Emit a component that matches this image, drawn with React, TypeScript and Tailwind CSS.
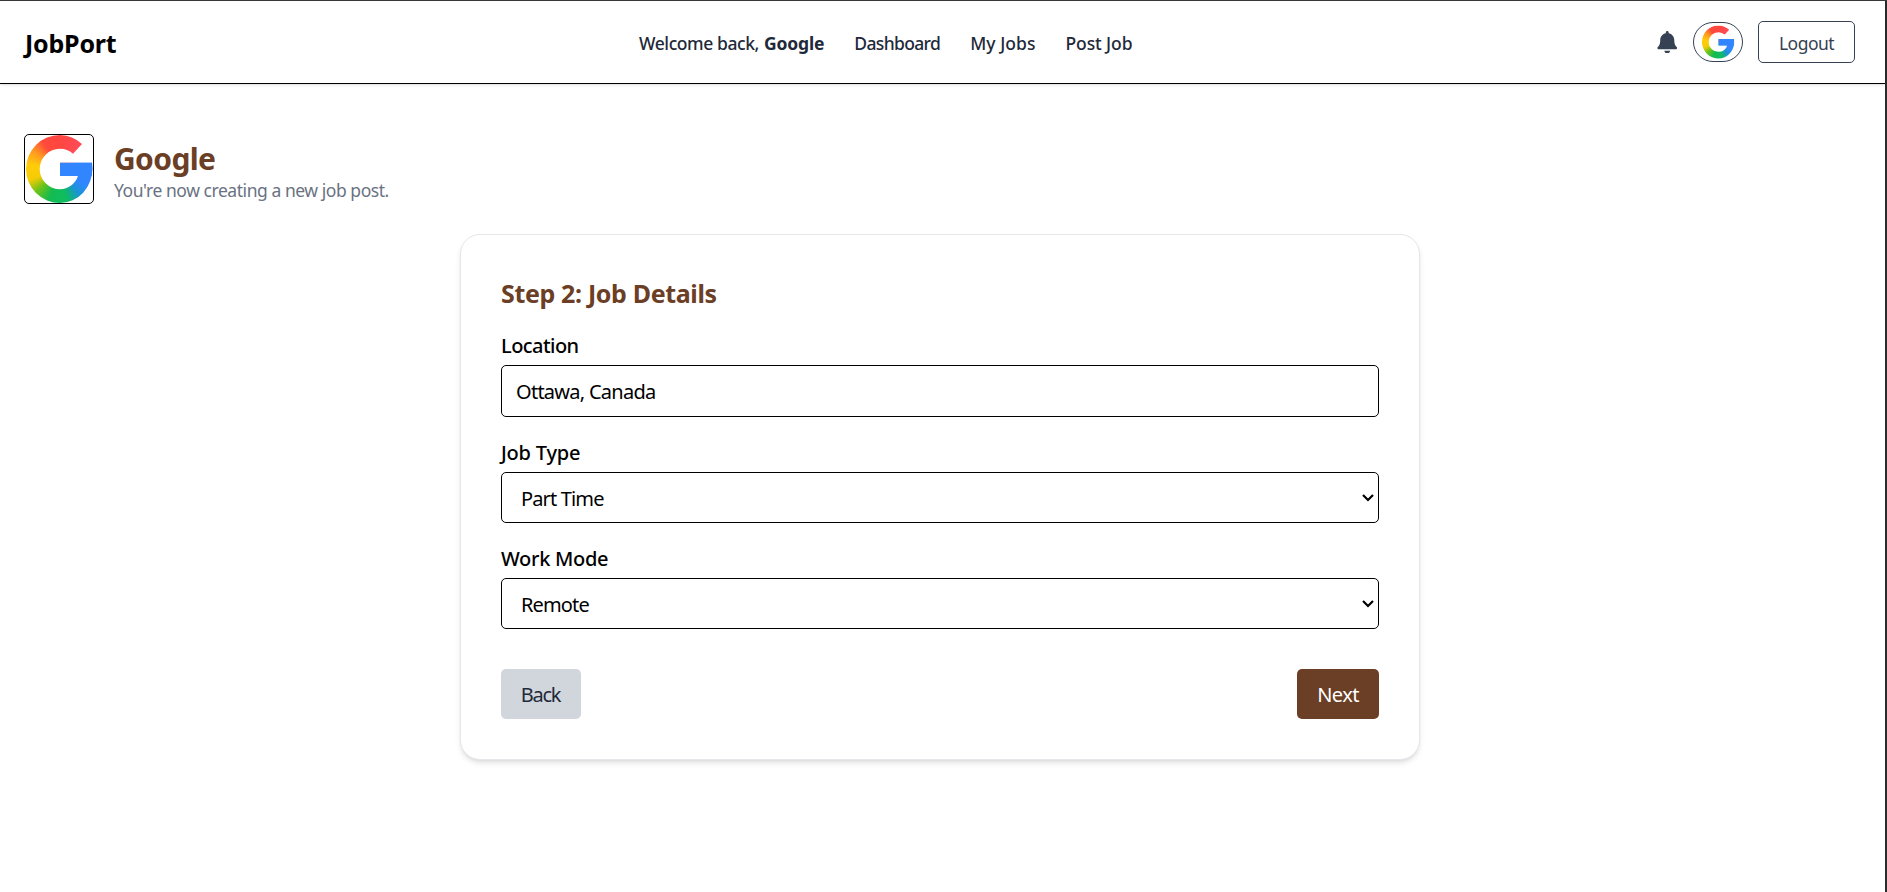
import React from "react";
import { FaBell } from "react-icons/fa";

function GoogleMark({ id, className }: { id: string; className: string }) {
  return (
    <svg viewBox="0 0 70 70" className={className} aria-label="Google">
      <defs>
        <clipPath id={id}>
          <path d="M58 10A34 34 0 0 0 36 1A34 34 0 0 0 2 35A34 34 0 0 0 36 69A32.3 34 0 0 0 68.3 34L68 28.7H36V42H54A19.6 19.6 0 0 1 36 55.3A20.3 20.3 0 0 1 15.7 35A20.3 20.3 0 0 1 36 14.7A20.3 20.3 0 0 1 49 19.7Z" />
        </clipPath>
      </defs>
      <g clipPath={`url(#${id})`}>
        <foreignObject x="0" y="0" width="70" height="70">
          <div className="h-[70px] w-[70px] bg-[conic-gradient(at_36px_35px,#ff4641_0deg,#ff4c58_45deg,#ff4c58_65deg,#3186ff_66deg,#3186ff_122deg,#1b93d8_142deg,#0ebc5f_168deg,#14bb50_200deg,#6cc31a_226deg,#f5cc06_250deg,#ffcc0a_278deg,#ff9a20_304deg,#ff4a3c_328deg,#ff4641_360deg)]" />
        </foreignObject>
        <rect x="35.5" y="28" width="34" height="14.5" fill="#3186ff" />
      </g>
    </svg>
  );
}

function Header() {
  return (
    <header className="flex h-[83px] items-center border-b border-black bg-white pl-6 pr-[30px] shadow-sm">
      <div className="w-[615px] pl-px pt-px text-[25px] font-bold leading-8 tracking-[-0.2px] text-black">JobPort</div>
      <nav className="flex grow items-center gap-[30px] whitespace-nowrap pt-[2px] text-[17.5px] font-medium leading-6 text-gray-800">
        <span className="flex">
          <span className="tracking-[-0.42px]">Welcome back,</span>
          <span className="ml-[5px] font-bold tracking-[-0.15px]">Google</span>
        </span>
        <a className="tracking-[-0.65px]">Dashboard</a>
        <a className="tracking-[0.05px]">My Jobs</a>
        <a className="tracking-[-0.1px]">Post Job</a>
      </nav>
      <div className="flex items-center text-gray-700">
        <FaBell className="mr-[15px] text-[22.5px]" />
        <div className="mr-[15px] flex h-10 w-[50px] items-center justify-center rounded-[20px] border border-gray-700">
          <GoogleMark id="mark-avatar" className="h-[34px] w-[34px]" />
        </div>
        <button className="h-[42px] w-[97px] rounded-[5px] border border-gray-700 pt-px text-[17.5px] leading-6 tracking-[-0.5px]">
          Logout
        </button>
      </div>
    </header>
  );
}

function Select({ label, value, labelClass }: { label: string; value: string; labelClass: string }) {
  return (
    <div>
      <label className={`mb-[4px] block pt-px font-medium leading-[30px] ${labelClass}`}>{label}</label>
      <div className="relative">
        <select
          defaultValue={value}
          className="block h-[51px] w-full appearance-none rounded-[5px] border border-black bg-white pl-[19px] pt-[3px] tracking-[-0.85px]"
        >
          <option>{value}</option>
        </select>
        <svg viewBox="0 0 12 8" className="absolute right-[5px] top-[22px] h-2 w-3" fill="none" stroke="black" strokeWidth="2.2">
          <path d="M1 1L6 6L11 1" />
        </svg>
      </div>
    </div>
  );
}

export default function App() {
  return (
    <div className="bg-[#3b3838] pt-px">
      <div className="h-[891px] rounded-tl-[3px] border-r-2 border-[#2b2b2b] bg-white font-['Noto_Sans',sans-serif] text-black">
        <Header />
        <section className="flex items-center pl-6 pt-[50px]">
          <div className="h-[70px] w-[70px] overflow-hidden rounded-[5px] border border-black">
            <GoogleMark id="mark-company" className="-ml-px -mt-px h-[70px] w-[70px]" />
          </div>
          <div className="ml-5 pt-[3px]">
            <h1 className="text-[30px] font-bold leading-[39px] tracking-[-0.6px] text-[#6b3e26]">Google</h1>
            <p className="text-[17.5px] leading-6 tracking-[-0.45px] text-gray-500">You're now creating a new job post.</p>
          </div>
        </section>
        <main className="ml-[460px] mt-[30px] h-[526px] w-[960px] rounded-[20px] border border-gray-200 bg-white p-10 text-[20px] shadow-md">
          <h2 className="mb-[19px] text-[25px] font-bold leading-9 tracking-[-0.35px] text-[#6b3e26]">Step 2: Job Details</h2>
          <form className="flex flex-col gap-5">
            <div>
              <label className="mb-[4px] block pt-px font-medium leading-[30px] tracking-[-0.55px]">Location</label>
              <input
                defaultValue="Ottawa, Canada"
                className="block h-[52px] w-full rounded-[5px] border border-black px-[14px] tracking-[-0.73px]"
              />
            </div>
            <Select label="Job Type" value="Part Time" labelClass="tracking-[-0.2px]" />
            <Select label="Work Mode" value="Remote" labelClass="tracking-[-0.3px]" />
            <div className="mt-5 flex justify-between">
              <button type="button" className="h-[50px] w-20 rounded-[5px] bg-gray-300 pr-2 pt-[2px] tracking-[-1.2px] text-gray-800">
                <span className="ml-[7px]">Back</span>
              </button>
              <button type="button" className="h-[50px] w-[82px] rounded-[5px] bg-[#6b3e26] pt-[2px] tracking-[-0.55px] text-white">
                Next
              </button>
            </div>
          </form>
        </main>
      </div>
    </div>
  );
}
